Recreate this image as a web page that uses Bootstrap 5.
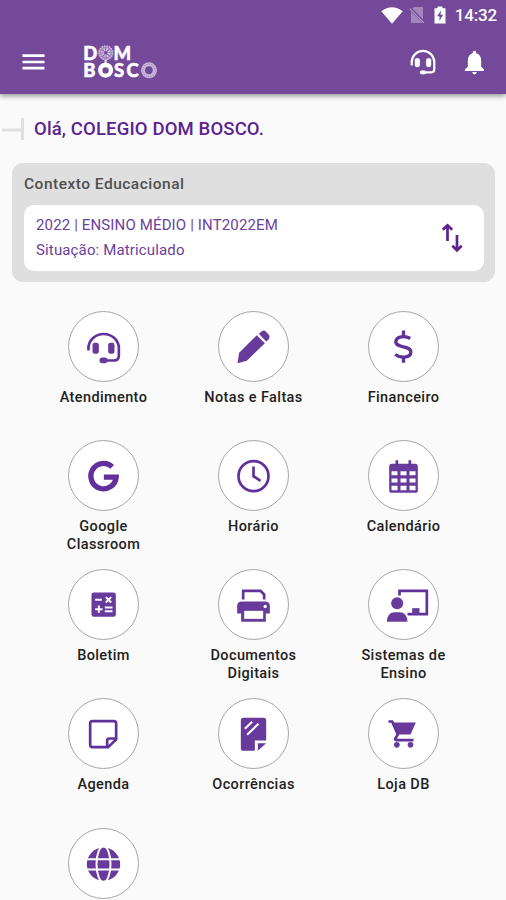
<!DOCTYPE html>
<html lang="pt-BR">
<head>
<meta charset="utf-8">
<meta name="viewport" content="width=device-width, initial-scale=1">
<title>Dom Bosco</title>
<link href="https://cdn.jsdelivr.net/npm/bootstrap@5.3.0/dist/css/bootstrap.min.css" rel="stylesheet">
<style>
  body { font-family: Roboto, sans-serif; background: #fafafa; color: #222; height: 900px; overflow: hidden; }
  main { height: 806px; overflow: hidden; }
  svg { display: block; flex: none; overflow: visible; }
  .topbar { background: #744999; height: 94px; box-shadow: 0 2px 5px rgba(0,0,0,.4); }
  .status { height: 30px; padding-right: 9px; }
  .clock { font-size: 17px; font-weight: 500; letter-spacing: -.2px; line-height: 30px; }
  .toolbar { height: 64px; padding: 0 21px 0 22px; }
  .headset { margin-right: 28px; }
  .brand-mark { margin-left: 37px; }
  .greeting { height: 69px; padding: 0 0 0 2px; }
  .greeting h1 { font-size: 18.5px; font-weight: 500; color: #5c2390; line-height: 24px; letter-spacing: .14px; margin: 0 0 0 10px; }
  .context { margin: 0 11px 0 12px; height: 119px; background: #dfdfdf; border-radius: 11px; padding: 9px 11px 11px 12px; }
  .context h2 { font-size: 15.5px; font-weight: 500; color: #505050; line-height: 24px; letter-spacing: .49px; margin-bottom: 9px; }
  .enrol { height: 66px; border-radius: 10px; padding: 0 21px 0 12px; color: #6b429c; font-size: 15px; line-height: 25px; letter-spacing: .14px; }
  .menu-grid { padding: 29px 27.5px 0 28.5px; }
  .tile { width: 150px; height: 129.15px; }
  .disc { width: 71px; height: 71px; border: 1px solid #a6a6a6; }
  .tile span { font-size: 14.5px; font-weight: 500; line-height: 17.5px; letter-spacing: .38px; margin-top: 7px; width: 112px; }
  .glyph { width: 69px; height: 69px; fill: #683a9b; stroke: none; }
  .ln { fill: none; stroke: #62309a; stroke-width: 8; }
  .ln-wide { stroke-width: 16; }
  .ln-mid { stroke-width: 10; }
  .wh { fill: #fff; }
  .wl { fill: none; stroke: #fff; stroke-width: 6; }
  .brand-txt { font-family: Lato, sans-serif; font-weight: 900; font-size: 18.5px; fill: #fff; stroke: #fff; stroke-width: .5; }
</style>
</head>
<body>
<header class="topbar text-white position-relative">
  <div class="status d-flex justify-content-end align-items-center">
    <svg width="22" height="17" viewBox="0 0 22 17"><path fill="#fff" d="M.3 4.3Q11-3.8 21.7 4.3L11 16.7Z"/></svg>
    <svg class="ms-1" width="20" height="18" viewBox="0 0 20 18"><path fill="#a486bd" d="M7 1H16V17H4V4Z"/><path d="M2.5 2L18 17.2" stroke="#744999" stroke-width="3"/><path d="M2.5 2.5L17 17" stroke="#a98dc1" stroke-width="1.3"/></svg>
    <svg class="ms-1" width="20" height="18" viewBox="0 0 20 18"><path fill="#fff" d="M4 2.2H6.5V.4H11.5V2.2H14.5V17.5H3.5V2.2Z"/><path fill="#744999" d="M10 4.5L6 10.3H8.5V15L12 8.8H9.5Z"/></svg>
    <span class="clock ms-1">14:32</span>
  </div>
  <div class="toolbar d-flex align-items-center">
    <svg width="23" height="16" viewBox="0 0 23 16" stroke="#fff" stroke-width="2.7"><path d="M.5 1.6H22.5M.5 8H22.5M.5 14.2H22.5"/></svg>
    <svg class="brand-mark" width="80" height="36" viewBox="0 0 80 36">
      <text class="brand-txt" y="15.6"><tspan x="1.2">D</tspan><tspan x="16.2" fill="#a585c0" stroke="none">O</tspan><tspan x="31.6">M</tspan></text>
      <g fill="none" stroke="#d2c2e0"><circle cx="23.8" cy="8.8" r="6.8" stroke-width="1.6" stroke-dasharray="1.5 1"/><circle cx="23.8" cy="8.8" r="3.2" stroke-width="3" stroke-dasharray="1.7 .8"/></g>
      <text class="brand-txt" y="33"><tspan x="1.2">B</tspan><tspan x="16">O</tspan><tspan x="32">S</tspan><tspan x="44.5">C</tspan><tspan x="59.2" fill="#bda4d2" stroke="none">O</tspan></text>
      <circle cx="23.6" cy="26.4" r="5.2" fill="none" stroke="#fff" stroke-width="4"/><path d="M23.6 16V20" stroke="#fff" stroke-width="2"/>
      <circle cx="67" cy="26.3" r="6" fill="none" stroke="#c9b6da" stroke-width="4"/><circle cx="67" cy="26.3" r="6.3" fill="none" stroke="#a282bd" stroke-width="1.2" stroke-dasharray="1 1.4"/>
    </svg>
    <svg class="headset ms-auto" width="26" height="26" viewBox="-53 -53 106 106" fill="#fff" stroke="#fff"><path fill="none" stroke-width="9" d="M-46 14V0A46 45 0 0 1 46 0V30Q46 42 34 42H0"/><rect x="-33" y="-15" width="20" height="35" rx="8"/><rect x="13" y="-15" width="20" height="35" rx="8"/><rect x="-12" y="35" width="24" height="15" rx="7"/></svg>
    <svg width="21" height="25" viewBox="0 0 22 26" fill="#fff"><path d="M11 .8Q12.8.8 12.9 3.2Q18 4.8 18 11V17.5L21 20.3V22H1V20.3L4 17.5V11Q4 4.8 9.1 3.2Q9.2.8 11 .8ZM8.6 23H13.4Q13 25.5 11 25.5Q9 25.5 8.6 23Z"/></svg>
  </div>
</header>

<main>
  <section class="greeting d-flex align-items-center">
    <svg width="22" height="22" viewBox="0 0 22 22"><path d="M0 12H20M20.5 0V22" fill="none" stroke="#dfdfdf" stroke-width="3"/></svg>
    <h1>Olá, COLEGIO DOM BOSCO.</h1>
  </section>

  <section class="context">
    <h2>Contexto Educacional</h2>
    <div class="enrol bg-white d-flex align-items-center justify-content-between">
      <div><div>2022 | ENSINO MÉDIO | INT2022EM</div><div>Situação: Matriculado</div></div>
      <svg width="21" height="28" viewBox="0 0 21 28"><path d="M5.5 17V2M.8 5.8L5.5 1.3L10.2 5.8M15 11V26M10.3 21.8L15 26.3L19.7 21.8" fill="none" stroke="#5c2390" stroke-width="2.7"/></svg>
    </div>
  </section>

  <nav class="menu-grid d-flex flex-wrap">
    <div class="tile d-flex flex-column align-items-center text-center">
      <div class="disc rounded-circle bg-white"><svg class="glyph" viewBox="-103.5 -103.5 207 207"><path class="ln" d="M-45 12V0A46 44 0 0 1 46 0V28Q46 42 32 42H0"/><rect x="-33" y="-11" width="19" height="33" rx="7"/><rect x="14" y="-11" width="19" height="33" rx="7"/><rect x="-12" y="33" width="24" height="17" rx="8"/></svg></div>
      <span>Atendimento</span>
    </div>
    <div class="tile d-flex flex-column align-items-center text-center">
      <div class="disc rounded-circle bg-white"><svg class="glyph" viewBox="-103.5 -103.5 207 207"><path d="M-48 50L-43 19L10 -34L34 -10L-20 43ZM16 -38L25 -46Q31 -50 37 -45L46 -35Q50 -29 46 -22L38 -15Z"/></svg></div>
      <span>Notas e Faltas</span>
    </div>
    <div class="tile d-flex flex-column align-items-center text-center">
      <div class="disc rounded-circle bg-white"><svg class="glyph" viewBox="-103.5 -103.5 207 207"><path class="ln ln-mid" d="M20 -24C6 -33 -23 -32 -23 -14C-23 6 22 -4 22 16C22 37 -10 35 -25 24M0 -48V-30M0 31V49"/></svg></div>
      <span>Financeiro</span>
    </div>
    <div class="tile d-flex flex-column align-items-center text-center">
      <div class="disc rounded-circle bg-white"><svg class="glyph" viewBox="-103.5 -103.5 207 207"><path class="ln ln-wide" d="M26 -26A38 38 0 1 0 38 5H1"/></svg></div>
      <span>Google Classroom</span>
    </div>
    <div class="tile d-flex flex-column align-items-center text-center">
      <div class="disc rounded-circle bg-white"><svg class="glyph" viewBox="-103.5 -103.5 207 207"><circle class="ln" cy="2" r="45"/><path class="ln" d="M0 -27V2L21 16"/></svg></div>
      <span>Horário</span>
    </div>
    <div class="tile d-flex flex-column align-items-center text-center">
      <div class="disc rounded-circle bg-white"><svg class="glyph" viewBox="-103.5 -103.5 207 207"><rect x="-43" y="-35" width="86" height="87" rx="8"/><path class="ln" d="M-20 -46V-30M19 -46V-30"/><path class="wh" d="M-36 -13h18v12h-18zM-9 -13h18v12h-18zM18 -13h18v12h-18zM-36 9h18v12h-18zM-9 9h18v12h-18zM18 9h18v12h-18zM-36 31h18v13h-18zM-9 31h18v13h-18zM18 31h18v13h-18z"/></svg></div>
      <span>Calendário</span>
    </div>
    <div class="tile d-flex flex-column align-items-center text-center">
      <div class="disc rounded-circle bg-white"><svg class="glyph" viewBox="-103.5 -103.5 207 207"><rect x="-36" y="-36" width="73" height="73" rx="7"/><path class="wl" d="M-25 -14H-5M7 -22L23 -6M23 -22L7 -6M-25 14H-3M-14 3V25M4 9H27M4 20H27"/></svg></div>
      <span>Boletim</span>
    </div>
    <div class="tile d-flex flex-column align-items-center text-center">
      <div class="disc rounded-circle bg-white"><svg class="glyph" viewBox="-103.5 -103.5 207 207"><path class="ln" d="M-31 -15V-41H21L32 -30V-15"/><path d="M-49 27V5Q-49 -9 -35 -9H35Q49 -9 49 5V27H37V52H-37V27Z"/><rect class="wh" x="-28" y="19" width="57" height="24"/><circle class="wh" cx="35" cy="6" r="5"/></svg></div>
      <span>Documentos Digitais</span>
    </div>
    <div class="tile d-flex flex-column align-items-center text-center">
      <div class="disc rounded-circle bg-white"><svg class="glyph" viewBox="-103.5 -103.5 207 207"><path class="ln" d="M-12 -27V-41H70V29H12"/><rect x="26" y="11" width="22" height="18"/><circle cx="-19" cy="-4" r="18"/><path d="M-50 52Q-49 23 -26 23H-12Q11 23 12 52Z"/></svg></div>
      <span>Sistemas de Ensino</span>
    </div>
    <div class="tile d-flex flex-column align-items-center text-center">
      <div class="disc rounded-circle bg-white"><svg class="glyph" viewBox="-103.5 -103.5 207 207"><path class="ln" d="M-33 -37H31Q38 -37 38 -30V18L14 41H-33Q-40 41 -40 34V-30Q-40 -37 -33 -37ZM11 41V22Q11 15 18 15H38"/></svg></div>
      <span>Agenda</span>
    </div>
    <div class="tile d-flex flex-column align-items-center text-center">
      <div class="disc rounded-circle bg-white"><svg class="glyph" viewBox="-103.5 -103.5 207 207"><path d="M-30 -47H30Q38 -47 38 -39V21H4V52H-30Q-38 52 -38 44V-39Q-38 -47 -30 -47ZM13 29H38L13 52Z"/><path class="wl" d="M-26 -14L-4 -35M-19 4L15 -29"/></svg></div>
      <span>Ocorrências</span>
    </div>
    <div class="tile d-flex flex-column align-items-center text-center">
      <div class="disc rounded-circle bg-white"><svg class="glyph" viewBox="-103.5 -103.5 207 207"><path d="M-30 -33H37L21 3H-17Z"/><path class="ln" d="M-45 -36H-34L-17 3L-25 16Q-26 20 -20 20H30"/><circle cx="-20" cy="34" r="8.5"/><circle cx="21" cy="34" r="8.5"/></svg></div>
      <span>Loja DB</span>
    </div>
    <div class="tile d-flex flex-column align-items-center text-center">
      <div class="disc rounded-circle bg-white"><svg class="glyph" viewBox="-103.5 -103.5 207 207"><circle cy="2" r="50"/><path class="wl" d="M-52 -13H52M-52 18H52"/><ellipse class="wl" cy="2" rx="21" ry="54"/></svg></div>
    </div>
  </nav>
</main>
<script src="https://cdn.jsdelivr.net/npm/bootstrap@5.3.0/dist/js/bootstrap.bundle.min.js"></script>
</body>
</html>
